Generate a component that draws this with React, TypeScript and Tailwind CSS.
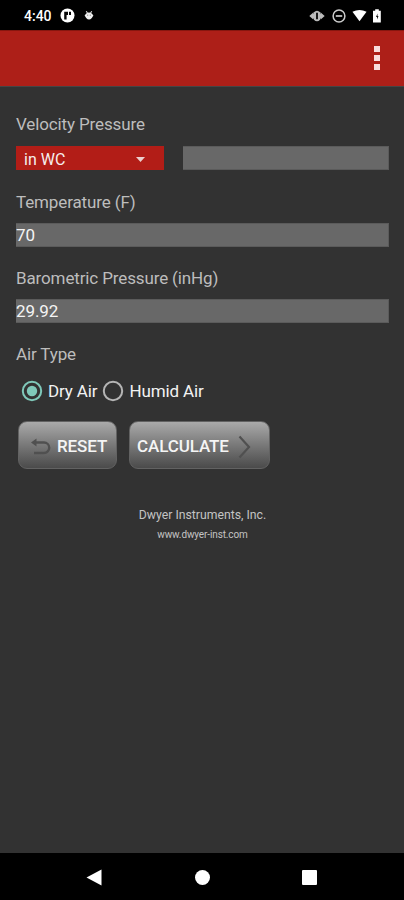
import { useState } from "react";
import type { ReactNode } from "react";

function StatusBar() {
  return (
    <header className="flex h-[30px] items-center bg-black pt-px pl-[24px] pr-[22px]">
      <span className="w-[28px] whitespace-nowrap text-[14px] leading-4 font-medium text-white">4:40</span>
      <svg className="ml-[8px] h-[15px] w-[15px]" viewBox="0 0 15 15">
        <circle cx="7.5" cy="7.5" r="7" fill="#fff" />
        <path d="M4.2 3.8H8V7H6.600V11.400H4.200ZM9 3.800h2v3.200H9z" fill="#080808" />
      </svg>
      <svg className="ml-[9px] h-[11px] w-[10px]" viewBox="0 0 10 11">
        <path d="M2.2 1.2 3.5 3M7.8 1.2 6.5 3" stroke="#ddd" strokeWidth="1.1" />
        <path d="M2.2 3.4Q5 1.7 7.8 3.4L9.4 5.6 7.8 8Q5 11 2.2 8L.6 5.6Z" fill="#eee" />
        <path d="M3.2 5.2h1M5.8 5.2h1" stroke="#777" strokeWidth="1" />
      </svg>
      <div className="ml-auto flex items-center">
        <svg className="h-[14px] w-[16px]" viewBox="0 0 16 14">
          <path d="M.3 7 4 3.7V10.3ZM15.700 7 12 3.700V10.3Z" fill="#bbb" />
          <ellipse cx="8" cy="7" rx="4.300" ry="5.200" fill="#bbb" />
          <path d="M8 3.800v6.400" stroke="#181818" strokeWidth="2" />
        </svg>
        <svg className="ml-[7px] h-[14px] w-[14px]" viewBox="0 0 14 14">
          <circle cx="7" cy="7" r="5.900" fill="none" stroke="#ccc" strokeWidth="1.500" />
          <path d="M3.800 7h6.400" stroke="#ccc" strokeWidth="1.700" />
        </svg>
        <svg className="ml-[6px] h-[13px] w-[15px]" viewBox="0 0 16 13">
          <path d="M.5 2.500Q8-1.300 15.500 2.500L8 12.500Z" fill="#fff" />
        </svg>
        <svg className="ml-[5px] h-[14px] w-[10px]" viewBox="0 0 10 14">
          <path d="M3.200.3h3.600v1.500h2V13.600H1V1.800h2.200Z" fill="#fff" />
          <path d="M5.500 4.500 4 8h1v2.500l1.500-3.500H5.500Z" fill="#111" />
        </svg>
      </div>
    </header>
  );
}

function Label({ children }: { children: ReactNode }) {
  return <div className="h-6 whitespace-nowrap text-[17px] leading-6 tracking-[-0.13px] text-[#bdbdbd]">{children}</div>;
}

function Field({ label, value }: { label: string; value: string }) {
  return (
    <input
      aria-label={label}
      defaultValue={value}
      className="block h-6 w-full min-w-0 border-y border-r border-[#5b5b5b] bg-[#686868] p-0 text-[17px] leading-5 tracking-[-0.1px] text-[#f4f4f4] outline-none"
    />
  );
}

function Radio({ label, selected, onSelect }: { label: string; selected: boolean; onSelect: () => void }) {
  return (
    <button role="radio" aria-checked={selected} onClick={onSelect} className="flex items-center gap-[5px] whitespace-nowrap text-[17px] leading-6 tracking-[-0.12px] text-[#f2f2f2]">
      <svg className="h-[22px] w-[22px]" viewBox="0 0 22 22">
        <circle cx="11" cy="11" r="9.200" fill="none" stroke={selected ? "#7fc8b9" : "#b5b5b5"} strokeWidth="2" />
        {selected && <circle cx="11" cy="11" r="5.200" fill="#7fc8b9" />}
      </svg>
      <span>{label}</span>
    </button>
  );
}

export default function App() {
  const [air, setAir] = useState("Dry Air");
  return (
    <div className="flex h-[900px] w-[404px] flex-col overflow-hidden bg-[#323232] font-['Roboto',sans-serif]">
      <StatusBar />
      <div className="flex h-[56px] items-center justify-end border-t border-[#87160f] bg-[#ad1f18] pr-[24px] pb-px">
        <button aria-label="Menu" className="flex flex-col gap-[3px]">
          <span className="h-[6px] w-[6px] bg-[#f8dddd]" />
          <span className="h-[6px] w-[6px] bg-[#f8dddd]" />
          <span className="h-[6px] w-[6px] bg-[#f8dddd]" />
        </button>
      </div>
      <main className="flex-1 border-t border-[#454545] pt-[25px] pr-[15px] pl-[16px]">
        <Label>Velocity Pressure</Label>
        <div className="mt-[10px] flex h-6 gap-[19px]">
          <button className="flex w-[148px] shrink-0 items-center justify-between bg-[#b21d17] pt-[2px] pr-[19px] pl-[8px] text-[16px] leading-6 text-[#f6eeee]">
            <span className="pt-px">in WC</span>
            <svg className="h-[5px] w-[9px]" viewBox="0 0 9 5">
              <path d="M0 0H9L4.500 5Z" fill="#ecd0ce" />
            </svg>
          </button>
          <Field label="Velocity Pressure" value="" />
        </div>
        <div className="mt-[20px] mb-[9px]">
          <Label>Temperature (F)</Label>
        </div>
        <Field label="Temperature" value="70" />
        <div className="mt-[19px] mb-[9px]">
          <Label>Barometric Pressure (inHg)</Label>
        </div>
        <Field label="Barometric Pressure" value="29.92" />
        <div className="mt-[19px]">
          <Label>Air Type</Label>
        </div>
        <div role="radiogroup" className="mt-[13px] ml-[5px] flex h-6 gap-[5px]">
          <Radio label="Dry Air" selected={air === "Dry Air"} onSelect={() => setAir("Dry Air")} />
          <Radio label="Humid Air" selected={air === "Humid Air"} onSelect={() => setAir("Humid Air")} />
        </div>
        <div className="mt-[18px] ml-[2px] flex h-[48px] gap-[12px] text-[17px] font-medium tracking-[-0.1px] text-[#f5f5f5]">
          <button className="flex w-[99px] items-center rounded-[9px] border border-[#626262] bg-linear-to-b from-[#aaaaaa] via-[#797979] to-[#4b4b4b] pt-[3px] pl-[12px]">
            <svg className="mr-[6px] h-[18px] w-[20px] shrink-0" viewBox="0 0 20 18" fill="none">
              <path d="M3 4.500H13A5 5 0 0 1 13 15H3" stroke="#505050" strokeWidth="2.400" />
              <path d="M0 4.500 5.500.5V8.500Z" fill="#505050" />
            </svg>
            RESET
          </button>
          <button className="flex w-[141px] items-center rounded-[9px] border border-[#626262] bg-linear-to-b from-[#aaaaaa] via-[#797979] to-[#4b4b4b] pt-[3px] pl-[7px]">
            CALCULATE
            <svg className="ml-[9px] h-[24px] w-[13px] shrink-0" viewBox="0 0 13 24" fill="none">
              <path d="M1.500 1.500 11 12 1.500 22.500" stroke="#505050" strokeWidth="2.200" />
            </svg>
          </button>
        </div>
        <footer className="mt-[36px] text-center text-[#c4c4c4]">
          <div className="text-[12.25px] leading-5">Dwyer Instruments, Inc.</div>
          <div className="text-[10px] leading-5 tracking-[-0.12px]">www.dwyer-inst.com</div>
        </footer>
      </main>
      <nav className="flex h-[47px] items-center bg-black pt-px pl-[86px]">
        <svg className="h-[17px] w-[16px]" viewBox="0 0 16 17">
          <path d="M.5 8.500 15.500.5V16.500Z" fill="#fff" />
        </svg>
        <span className="ml-[93px] h-[15px] w-[15px] rounded-full bg-white" />
        <span className="ml-[92px] h-[15px] w-[15px] rounded-[1px] bg-white" />
      </nav>
    </div>
  );
}
